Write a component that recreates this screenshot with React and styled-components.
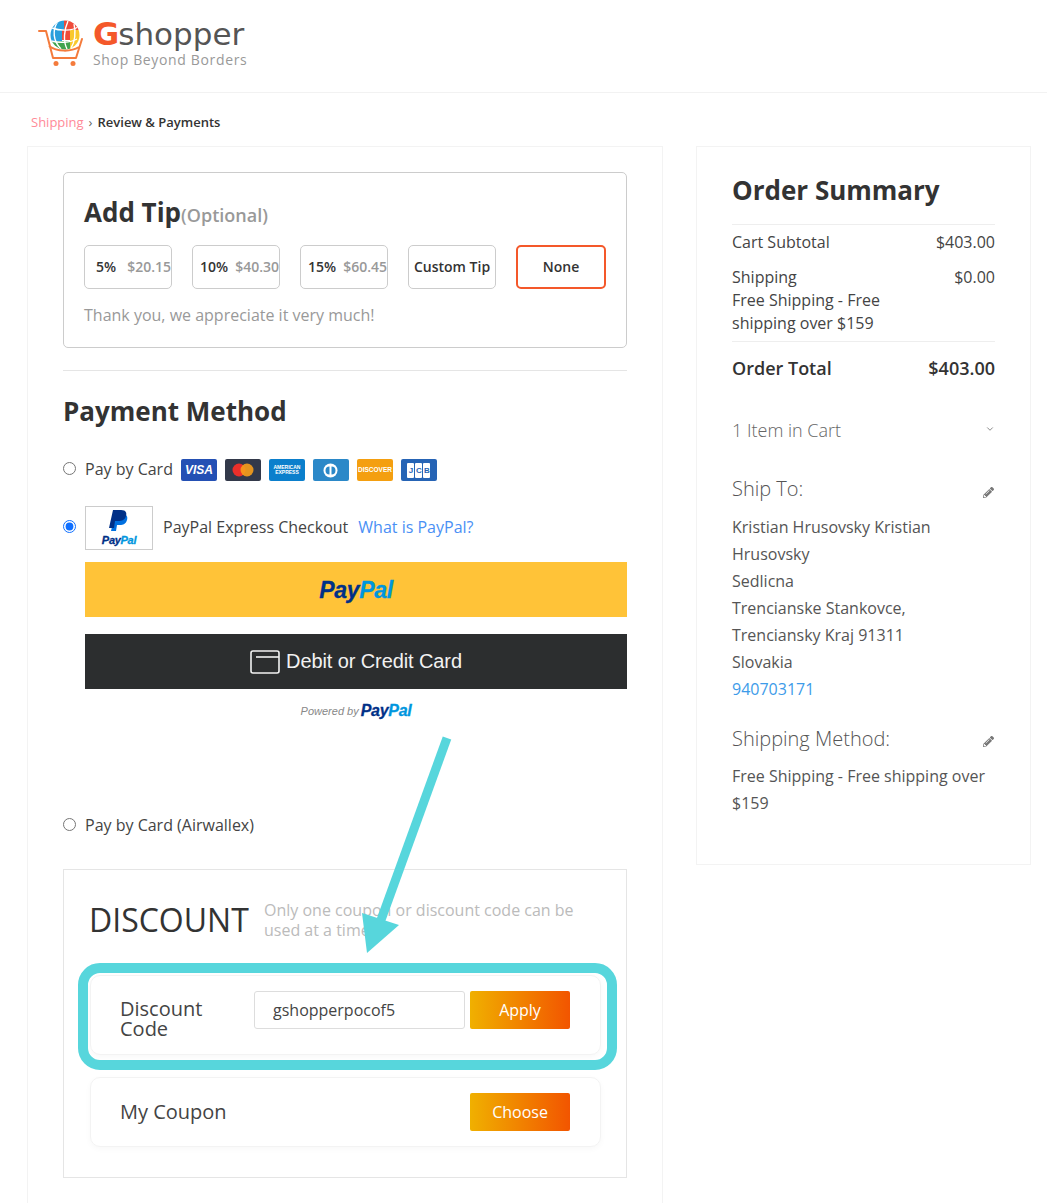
import React from 'react';
import styled, { createGlobalStyle } from 'styled-components';
import { FaPencilAlt } from 'react-icons/fa';
import { ChevronDown } from 'lucide-react';

const GlobalStyle = createGlobalStyle`
  html, body {
    margin: 0;
    padding: 0;
    background: #fff;
    height: 1203px;
    overflow: hidden;
    font-family: "Open Sans", "Liberation Sans", sans-serif;
    color: #333;
  }
  * { box-sizing: border-box; }
`;

const Page = styled.div`
  position: relative;
  width: 1047px;
  height: 1203px;
  overflow: hidden;
`;

const Header = styled.header`
  height: 93px;
  padding: 20px 0 0 38px;
  border-bottom: 1px solid #f2f2f2;
  display: flex;
  gap: 9px;
`;

const LogoText = styled.div`
  display: flex;
  flex-direction: column;
`;

const Wordmark = styled.div`
  height: 32px;
  margin-top: -2px;
  line-height: 32px;
  font-family: "DejaVu Sans", sans-serif;
  font-size: 31px;
  color: #555;
  white-space: nowrap;
  b {
    color: #f4582a;
    font-size: 32px;
    font-weight: 700;
    letter-spacing: -1px;
  }
`;

const Tagline = styled.div`
  margin-top: 1px;
  font-size: 14px;
  line-height: 18px;
  color: #999;
  letter-spacing: 0.65px;
  white-space: nowrap;
`;

const Breadcrumb = styled.nav`
  height: 53px;
  padding: 19px 0 0 31px;
  font-size: 13px;
  line-height: 20px;
  color: #333;
  span { color: #ff8a98; }
  i { font-style: normal; margin: 0 5px; color: #666; }
  strong { font-weight: 600; }
`;

const Columns = styled.div`
  display: flex;
  align-items: flex-start;
  gap: 33px;
  padding-left: 27px;
`;

const Main = styled.main`
  width: 636px;
  min-height: 1100px;
  padding: 25px 35px;
  border: 1px solid #f3f3f3;
`;

const Aside = styled.aside`
  width: 335px;
  padding: 25px 35px 47px;
  border: 1px solid #f3f3f3;
`;

const TipBox = styled.section`
  height: 176px;
  padding: 21px 20px 0;
  border: 1px solid #ccc;
  border-radius: 5px;
`;

const Title = styled.h2`
  margin: ${p => p.$top || 0}px 0 0;
  font-size: 26px;
  line-height: 36px;
  font-weight: 700;
  color: #333;
  white-space: nowrap;
  small {
    font-size: 18px;
    font-weight: 600;
    color: #999;
  }
`;

const TipRow = styled.div`
  display: flex;
  gap: 20px;
  margin-top: 12px;
`;

const TipButton = styled.div`
  width: ${p => (p.$active ? 90 : 88)}px;
  height: 44px;
  display: flex;
  align-items: center;
  justify-content: ${p => (p.$spread ? 'space-between' : 'center')};
  padding: ${p => (p.$spread ? '0 0 2px ' + p.$spread + 'px' : '0 0 2px')};
  border: ${p => (p.$active ? '2px solid #f4582a' : '1px solid #ccc')};
  border-radius: 5px;
  font-size: 14px;
  font-weight: 600;
  color: #333;
  white-space: nowrap;
  overflow: hidden;
  em {
    font-style: normal;
    color: #999;
  }
`;

const TipNote = styled.p`
  margin: 14px 0 0;
  font-size: 16px;
  line-height: 24px;
  color: #999;
`;

const Rule = styled.hr`
  margin: 22px 0 0;
  border: 0;
  border-top: 1px solid #e5e5e5;
`;

const PayRow = styled.label`
  display: flex;
  align-items: center;
  margin-top: ${p => p.$top}px;
  min-height: 22px;
  font-size: 16px;
  line-height: 22px;
  color: #444;
  white-space: nowrap;
`;

const PayText = styled.span`
  display: block;
  line-height: 20px;
  margin-bottom: 2px;
`;

const Radio = styled.input.attrs({ type: 'radio', name: 'pay' })`
  width: 13px;
  height: 13px;
  margin: 0 9px ${p => (p.$lift ? 4 : 1)}px 0;
  accent-color: #0f6fff;
`;

const CardList = styled.div`
  display: flex;
  gap: 8px;
  margin-left: 8px;
`;

const CardBadge = styled.div`
  width: 36px;
  height: 22px;
  border-radius: 2px;
  background: ${p => p.$bg};
  color: #fff;
  display: flex;
  align-items: center;
  justify-content: center;
  gap: 1px;
  text-align: center;
  font-family: "Liberation Sans", sans-serif;
  font-weight: 700;
  font-size: ${p => p.$size || 8}px;
  font-style: ${p => (p.$italic ? 'italic' : 'normal')};
  line-height: 1;
`;

const JcbTile = styled.span`
  width: 7px;
  height: 15px;
  border-radius: 1px;
  background: #fff;
  color: #2664b5;
  font-size: 8px;
  line-height: 15px;
`;

const PaypalMark = styled.div`
  width: 68px;
  height: 44px;
  border: 1px solid #ccc;
  margin-right: 10px;
  display: flex;
  flex-direction: column;
  align-items: center;
  padding-top: 3px;
`;

const PaypalWord = styled.span`
  font-family: "Liberation Sans", sans-serif;
  font-weight: 700;
  font-style: italic;
  font-size: ${p => p.$size}px;
  line-height: 1;
  color: #003087;
  letter-spacing: -0.3px;
  -webkit-text-stroke: 0.3px currentColor;
  b { color: #0096de; font-weight: 700; }
`;

const WhatLink = styled.a`
  margin-left: 10px;
  color: #4a90f5;
`;

const YellowButton = styled.div`
  margin: 12px 0 0 22px;
  height: 55px;
  background: #ffc338;
  display: flex;
  align-items: center;
  justify-content: center;
  padding-top: 1px;
`;

const DarkButton = styled.div`
  margin: 17px 0 0 22px;
  height: 55px;
  background: #2c2e2f;
  display: flex;
  align-items: center;
  justify-content: center;
  gap: 6px;
  font-family: "Liberation Sans", sans-serif;
  font-size: 20px;
  letter-spacing: -0.1px;
  color: #f2f2f2;
`;

const Powered = styled.div`
  margin: 12px 0 0 22px;
  height: 20px;
  display: flex;
  align-items: center;
  justify-content: center;
  gap: 2px;
  font-family: "Liberation Sans", sans-serif;
  font-size: 11px;
  font-style: italic;
  color: #888;
`;

const DiscountBox = styled.section`
  position: relative;
  margin-top: 33px;
  padding: 30px 25px 30px 26px;
  border: 1px solid #e5e5e5;
`;

const DiscountHead = styled.div`
  display: flex;
  align-items: center;
  height: 40px;
`;

const DiscountTitle = styled.h3`
  margin: 0 0 0 -1px;
  font-size: 32px;
  line-height: 40px;
  font-weight: 400;
  color: #333;
  width: 175px;
  flex: none;
`;

const DiscountHint = styled.p`
  margin: 0;
  font-size: 16px;
  line-height: 20px;
  color: #bbb;
`;

const CouponCard = styled.div`
  display: flex;
  align-items: ${p => (p.$code ? 'flex-start' : 'center')};
  height: ${p => (p.$code ? 80 : 70)}px;
  margin-top: ${p => p.$top}px;
  padding: ${p => (p.$code ? '15px 30px 0 29px' : '0 30px 0 29px')};
  border: 1px solid #f3f3f3;
  border-radius: 10px;
  box-shadow: 0 2px 6px rgba(0, 0, 0, 0.03);
`;

const CouponLabel = styled.div`
  font-size: 20px;
  line-height: 20px;
  color: #444;
  width: ${p => (p.$code ? '134px' : 'auto')};
  margin-top: ${p => (p.$code ? 8 : 0)}px;
  flex: ${p => (p.$code ? 'none' : 1)};
`;

const CodeInput = styled.input`
  width: 211px;
  height: 38px;
  padding: 0 18px;
  border: 1px solid #ddd;
  border-radius: 3px;
  font: 16px "Open Sans", sans-serif;
  color: #444;
  margin-right: 5px;
  outline: none;
`;

const OrangeButton = styled.div`
  width: 100px;
  height: 38px;
  border-radius: 2px;
  background: linear-gradient(90deg, #f0b000, #f25500);
  color: #fff;
  font-size: 16px;
  line-height: 38px;
  text-align: center;
  flex: none;
`;

const Highlight = styled.div`
  position: absolute;
  left: 14px;
  top: 93px;
  width: 539px;
  height: 107px;
  border: 10px solid #57d6dc;
  border-radius: 22px;
  pointer-events: none;
`;

const ArrowLayer = styled.svg`
  position: absolute;
  left: 0;
  top: 0;
  pointer-events: none;
`;

const SummaryTitle = styled.h2`
  margin: 0 0 16px;
  font-size: 26px;
  line-height: 36px;
  font-weight: 700;
  color: #333;
`;

const SummaryTable = styled.div`
  border-top: 1px solid #eee;
  padding: 6px 0;
`;

const SummaryRow = styled.div`
  display: flex;
  justify-content: space-between;
  gap: 20px;
  margin-top: ${p => p.$top || 0}px;
  font-size: 16px;
  line-height: 23px;
  color: #444;
`;

const ShippingName = styled.div`
  width: 180px;
`;

const TotalRow = styled.div`
  display: flex;
  justify-content: space-between;
  border-top: 1px solid #eee;
  padding-top: 14px;
  font-size: 18px;
  line-height: 24px;
  font-weight: 600;
  color: #333;
`;

const CartToggle = styled.div`
  display: flex;
  justify-content: space-between;
  margin-top: 38px;
  font-size: 18px;
  line-height: 24px;
  font-weight: 300;
  color: #666;
  svg { margin-top: 6px; color: #444; }
`;

const SideHead = styled.div`
  display: flex;
  justify-content: space-between;
  align-items: center;
  margin-top: ${p => p.$top}px;
  font-size: 20px;
  line-height: 28px;
  font-weight: 300;
  color: #555;
  svg { margin: ${p => p.$pencil}px 1px 0 0; color: #777; }
`;

const SideText = styled.div`
  margin-top: ${p => p.$top}px;
  font-size: 16px;
  line-height: 27px;
  color: #555;
  a { color: #3d9be9; }
`;

const GLOBE_PATCHES = [
  ['M50 20h14v11H50z', '#2a9fdc'],
  ['M64 20h16v10H64z', '#ef4b3a'],
  ['M50 31h12v10H50z', '#2a9fdc'],
  ['M62 30h8v10h-8z', '#ef4b3a'],
  ['M70 30h10v20H70z', '#f9c82b'],
  ['M50 41h20v9H50z', '#3fa34d'],
];

const GLOBE_GRID = [
  'M58 21c-6 9-5 20 3 28',
  'M68 21c-4 9-5 20-1 28',
  'M74 24c2 8 1 18-3 24',
  'M52 28c8 3 20 3 26-1',
  'M51 41c8 2 19 2 26-2',
];

const Logo = () => (
  <svg width="46" height="48" viewBox="38 20 46 48" fill="none">
    <defs>
      <clipPath id="globe-clip"><circle cx="65" cy="35" r="14.500" /></clipPath>
    </defs>
    <g clipPath="url(#globe-clip)">
      {GLOBE_PATCHES.map(([d, fill]) => <path key={d} d={d} fill={fill} />)}
      {GLOBE_GRID.map(d => <path key={d} d={d} stroke="#fff" strokeWidth="1.400" />)}
    </g>
    <path d="M39 31h7l7 27h23l6-19" stroke="#f47b3c" strokeWidth="2" strokeLinecap="round" strokeLinejoin="round" />
    <path d="M49 46c8 6 22 6 30 1" stroke="#f47b3c" strokeWidth="2" />
    <circle cx="56" cy="63.500" r="2.500" fill="#f47b3c" />
    <circle cx="73" cy="63.500" r="2.500" fill="#f47b3c" />
  </svg>
);

const PaypalIcon = () => (
  <svg width="22" height="25" viewBox="0 0 22 25">
    <path d="M7 4h7c5 0 6 3 5 6-1 4-4 5-7 5H9l-1 6H3z" fill="#0070e0" />
    <path d="M5 0h8c5 0 6 3 5 6-1 4-4 5-8 5H7l-1 7H1z" fill="#003087" />
  </svg>
);

const App = () => (
  <Page>
    <GlobalStyle />
    <Header>
      <Logo />
      <LogoText>
        <Wordmark><b>G</b>shopper</Wordmark>
        <Tagline>Shop Beyond Borders</Tagline>
      </LogoText>
    </Header>
    <Breadcrumb>
      <span>Shipping</span><i>›</i><strong>Review &amp; Payments</strong>
    </Breadcrumb>
    <Columns>
      <Main>
        <TipBox>
          <Title>Add Tip<small>(Optional)</small></Title>
          <TipRow>
            <TipButton $spread={11}>5%<em>$20.15</em></TipButton>
            <TipButton $spread={7}>10%<em>$40.30</em></TipButton>
            <TipButton $spread={7}>15%<em>$60.45</em></TipButton>
            <TipButton>Custom Tip</TipButton>
            <TipButton $active>None</TipButton>
          </TipRow>
          <TipNote>Thank you, we appreciate it very much!</TipNote>
        </TipBox>
        <Rule />
        <Title $top={22}>Payment Method</Title>
        <PayRow $top={30}>
          <Radio $lift />
          <PayText>Pay by Card</PayText>
          <CardList>
            <CardBadge $bg="#2450b4" $size={12} $italic>VISA</CardBadge>
            <CardBadge $bg="#33394a">
              <svg width="24" height="14" viewBox="0 0 24 14">
                <circle cx="8" cy="7" r="6.500" fill="#eb2f2a" />
                <circle cx="16" cy="7" r="6.500" fill="#f79e1b" opacity="0.9" />
              </svg>
            </CardBadge>
            <CardBadge $bg="#0b7fcc" $size={5}>AMERICAN<br />EXPRESS</CardBadge>
            <CardBadge $bg="#2b88c8">
              <svg width="15" height="15" viewBox="0 0 15 15">
                <circle cx="7.500" cy="7.500" r="7" fill="#fff" />
                <path d="M6.500 3.500a4 4 0 0 0 0 8zM8.500 3.500a4 4 0 0 1 0 8z" fill="#2b88c8" />
              </svg>
            </CardBadge>
            <CardBadge $bg="#f49f10" $size={6.500}>DISCOVER</CardBadge>
            <CardBadge $bg="#2664b5">
              <JcbTile>J</JcbTile><JcbTile>C</JcbTile><JcbTile>B</JcbTile>
            </CardBadge>
          </CardList>
        </PayRow>
        <PayRow $top={25}>
          <Radio $lift defaultChecked />
          <PaypalMark>
            <PaypalIcon />
            <PaypalWord $size={11}>Pay<b>Pal</b></PaypalWord>
          </PaypalMark>
          <PayText>PayPal Express Checkout</PayText>
          <WhatLink><PayText>What is PayPal?</PayText></WhatLink>
        </PayRow>
        <YellowButton>
          <PaypalWord $size={23}>Pay<b>Pal</b></PaypalWord>
        </YellowButton>
        <DarkButton>
          <svg width="30" height="24" viewBox="0 0 30 24" fill="none" stroke="#f2f2f2" strokeWidth="1.600">
            <rect x="1" y="1" width="28" height="22" rx="2" />
            <path d="M6 7h23" />
          </svg>
          Debit or Credit Card
        </DarkButton>
        <Powered>
          Powered by <PaypalWord $size={16}>Pay<b>Pal</b></PaypalWord>
        </Powered>
        <PayRow $top={93}>
          <Radio />
          Pay by Card (Airwallex)
        </PayRow>
        <DiscountBox>
          <DiscountHead>
            <DiscountTitle>DISCOUNT</DiscountTitle>
            <DiscountHint>Only one coupon or discount code can be used at a time.</DiscountHint>
          </DiscountHead>
          <CouponCard $code $top={35}>
            <CouponLabel $code>Discount Code</CouponLabel>
            <CodeInput defaultValue="gshopperpocof5" />
            <OrangeButton>Apply</OrangeButton>
          </CouponCard>
          <CouponCard $top={22}>
            <CouponLabel>My Coupon</CouponLabel>
            <OrangeButton>Choose</OrangeButton>
          </CouponCard>
          <Highlight />
        </DiscountBox>
      </Main>
      <Aside>
        <SummaryTitle>Order Summary</SummaryTitle>
        <SummaryTable>
          <SummaryRow><span>Cart Subtotal</span><span>$403.00</span></SummaryRow>
          <SummaryRow $top={12}>
            <ShippingName>Shipping<br />Free Shipping - Free shipping over $159</ShippingName>
            <span>$0.00</span>
          </SummaryRow>
        </SummaryTable>
        <TotalRow><span>Order Total</span><span>$403.00</span></TotalRow>
        <CartToggle>1 Item in Cart<ChevronDown size={10} strokeWidth={1.500} /></CartToggle>
        <SideHead $top={33} $pencil={6}>Ship To:<FaPencilAlt size={11} /></SideHead>
        <SideText $top={11}>
          Kristian Hrusovsky Kristian Hrusovsky<br />
          Sedlicna<br />
          Trencianske Stankovce, Trenciansky Kraj 91311<br />
          Slovakia<br />
          <a>940703171</a>
        </SideText>
        <SideHead $top={22} $pencil={4}>Shipping Method:<FaPencilAlt size={11} /></SideHead>
        <SideText $top={10}>Free Shipping - Free shipping over $159</SideText>
      </Aside>
    </Columns>
    <ArrowLayer width="1047" height="1203" viewBox="0 0 1047 1203">
      <path d="M447 738L381 920" stroke="#57d6dc" strokeWidth="9" />
      <path d="M362 913L399 925L367 953z" fill="#57d6dc" />
    </ArrowLayer>
  </Page>
);

export default App;
